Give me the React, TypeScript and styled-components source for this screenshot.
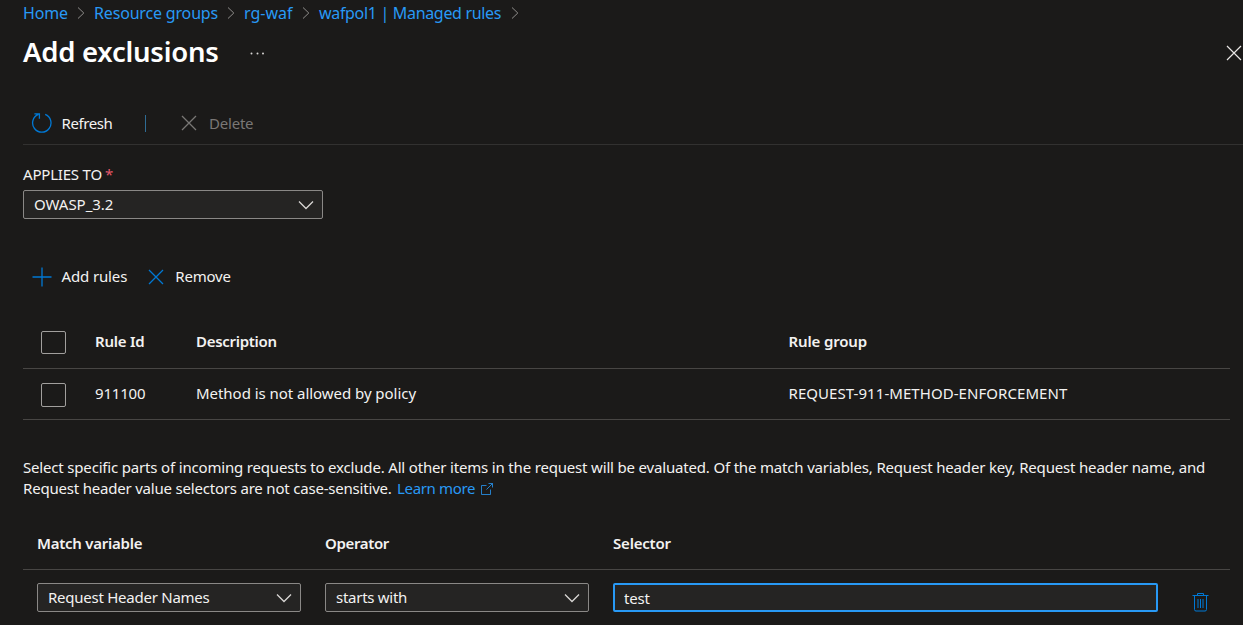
import React from 'react';
import styled, { createGlobalStyle } from 'styled-components';

const GlobalStyle = createGlobalStyle`
  * { box-sizing: border-box; }
  html, body { margin: 0; background: #1b1a19; overflow: hidden; }
  body {
    font-family: "Noto Sans", "Open Sans", sans-serif;
    font-size: 15px;
    line-height: 21px;
    color: #f3f2f1;
  }
`;

const Page = styled.main`
  width: 1243px;
  height: 625px;
  padding-left: 23px;
  overflow: hidden;
  background: #1b1a19;
`;

const Label = styled.span<{ $track?: number }>`
  letter-spacing: ${p => p.$track ?? -0.2}px;
  white-space: nowrap;
`;

const Breadcrumb = styled.nav`
  display: flex;
  align-items: center;
  height: 26px;
`;

const Crumb = styled.a<{ $width: number; $track: number }>`
  width: ${p => p.$width}px;
  color: #2899f5;
  font-size: 16px;
  letter-spacing: ${p => p.$track}px;
  white-space: nowrap;
`;

const CrumbArrow = styled.svg`
  width: 8px;
  height: 12px;
  margin: 0 9px;
  fill: none;
  stroke: #8f8d8b;
`;

const TitleBar = styled.header`
  display: flex;
  align-items: center;
  height: 52px;
`;

const Title = styled.h1`
  width: 227px;
  margin: 0;
  font-size: 27.5px;
  font-weight: 600;
  line-height: 36px;
  letter-spacing: -0.25px;
  color: #fff;
  white-space: nowrap;
`;

const More = styled.svg`
  width: 16px;
  height: 4px;
  margin-top: 1px;
  fill: #d8d6d4;
`;

const Close = styled.svg`
  width: 16px;
  height: 16px;
  margin: 2px 1px 0 auto;
  fill: none;
  stroke: #e8e6e4;
  stroke-width: 1.2;
`;

const Toolbar = styled.div`
  display: flex;
  align-items: center;
  height: 67px;
  padding: 24px 0 0 8px;
  border-bottom: 1px solid #323130;
`;

const Command = styled.button<{ $gap: number; $disabled?: boolean }>`
  display: flex;
  align-items: center;
  gap: ${p => p.$gap}px;
  padding: 0;
  border: 0;
  background: none;
  font: inherit;
  color: ${p => (p.$disabled ? '#797775' : '#f3f2f1')};
`;

const Glyph = styled.svg<{ $size: number; $tone?: string }>`
  width: ${p => p.$size}px;
  height: ${p => p.$size}px;
  fill: none;
  stroke: ${p => p.$tone ?? '#0078d4'};
  stroke-width: 1.3;
`;

const Separator = styled.i`
  width: 1px;
  height: 17px;
  margin: 0 35px 0 33px;
  background: #2f6c94;
`;

const FieldLabel = styled.label`
  display: block;
  height: 45px;
  padding-top: 19px;
`;

const Required = styled.span`
  margin-left: 3px;
  color: #e5586a;
`;

const Dropdown = styled.div<{ $width: number }>`
  display: flex;
  align-items: center;
  justify-content: space-between;
  width: ${p => p.$width}px;
  height: 29px;
  padding: 0 8px 0 10px;
  border: 1px solid #8a8886;
  border-radius: 2px;
  background: #252423;
`;

const Chevron = styled.svg`
  width: 16px;
  height: 10px;
  margin-top: 1px;
  fill: none;
  stroke: #d8d6d4;
  stroke-width: 1.3;
`;

const RuleActions = styled.div`
  display: flex;
  align-items: center;
  gap: 20.5px;
  height: 21px;
  margin: 47px 0 0 9px;
`;

const RuleRow = styled.div<{ $header?: boolean }>`
  display: grid;
  grid-template-columns: 54px 101px 592.5px 1fr;
  align-items: center;
  width: 1207px;
  height: ${p => (p.$header ? 53 : 51)}px;
  padding: 0 0 2px 18px;
  border-bottom: 1px solid #484644;
  font-weight: ${p => (p.$header ? 600 : 400)};
`;

const RuleTable = styled.section`
  margin-top: 29px;
`;

const Checkbox = styled.span<{ $height: number; $drop: number }>`
  width: 25px;
  height: ${p => p.$height}px;
  margin-top: ${p => p.$drop}px;
  border: 1px solid #a19f9d;
  border-radius: 2px;
`;

const Help = styled.p`
  margin: 37px 0 0;
  white-space: nowrap;
`;

const LearnMore = styled.a`
  margin-left: 1.5px;
  color: #2899f5;
`;

const ExternalIcon = styled.svg`
  width: 14px;
  height: 14px;
  margin-left: 4.5px;
  vertical-align: -2px;
  fill: none;
  stroke: #2899f5;
  stroke-opacity: 0.8;
`;

const MatchRow = styled.div<{ $header?: boolean }>`
  display: grid;
  grid-template-columns: 288px 288px 545px 1fr;
  align-items: center;
  width: 1207px;
  height: ${p => (p.$header ? 52 : 56)}px;
  padding-left: 14px;
  border-bottom: 1px solid ${p => (p.$header ? '#484644' : 'transparent')};
  font-weight: ${p => (p.$header ? 600 : 400)};
`;

const MatchTable = styled.section`
  margin-top: 19px;
`;

const SelectorInput = styled.input`
  width: 545px;
  height: 29px;
  padding: 1px 9px 0;
  border: 2px solid #2899f5;
  border-radius: 2px;
  outline: 0;
  background: #252423;
  color: #f3f2f1;
  font: inherit;
  letter-spacing: -0.2px;
`;

const Trash = styled.svg`
  width: 17px;
  height: 20px;
  margin: 9px 0 0 34px;
  fill: none;
  stroke: #0078d4;
`;

const ArrowRight = () => (
  <CrumbArrow viewBox="0 0 8 12"><path d="M1 .5 6.8 6 1 11.5" /></CrumbArrow>
);

const ChevronDown = () => (
  <Chevron viewBox="0 0 16 10"><path d="M1 1.5 8 8.5 15 1.5" /></Chevron>
);

const Cross = ({ tone }: { tone?: string }) => (
  <Glyph $size={16} $tone={tone} viewBox="0 0 16 16"><path d="M1 1 15 15M15 1 1 15" /></Glyph>
);

const crumbs = [
  { text: 'Home', width: 45, track: -0.2 },
  { text: 'Resource groups', width: 124, track: -0.17 },
  { text: 'rg-waf', width: 49, track: 0 },
  { text: 'wafpol1 | Managed rules', width: 183, track: -0.32 },
];

export default function App() {
  return (
    <Page>
      <GlobalStyle />
      <Breadcrumb>
        {crumbs.map(c => (
          <React.Fragment key={c.text}>
            <Crumb $width={c.width} $track={c.track}>{c.text}</Crumb>
            <ArrowRight />
          </React.Fragment>
        ))}
      </Breadcrumb>
      <TitleBar>
        <Title>Add exclusions</Title>
        <More viewBox="0 0 16 4">
          <circle cx="1.5" cy="2.5" r="1" /><circle cx="7.5" cy="2.5" r="1" /><circle cx="13" cy="2.5" r="1" />
        </More>
        <Close viewBox="0 0 16 16"><path d="M1 1 15 15M15 1 1 15" /></Close>
      </TitleBar>
      <Toolbar>
        <Command $gap={9.5}>
          <Glyph $size={21} viewBox="0 0 21 21">
            <path d="M14.2 1.4A9.2 9.2 0 1 1 7.4 1.4M3.4 .9H8.4V5.7" />
          </Glyph>
          <Label $track={-0.4}>Refresh</Label>
        </Command>
        <Separator />
        <Command $gap={11.5} $disabled>
          <Cross tone="#797775" />
          <Label>Delete</Label>
        </Command>
      </Toolbar>
      <FieldLabel><Label $track={-0.2}>APPLIES TO</Label><Required>*</Required></FieldLabel>
      <Dropdown $width={300}><Label $track={-0.03}>OWASP_3.2</Label><ChevronDown /></Dropdown>
      <RuleActions>
        <Command $gap={9.5}>
          <Glyph $size={20} viewBox="0 0 20 20"><path d="M10 .5V19.5M.5 10H19.5" /></Glyph>
          <Label $track={-0.13}>Add rules</Label>
        </Command>
        <Command $gap={11.5}>
          <Cross />
          <Label>Remove</Label>
        </Command>
      </RuleActions>
      <RuleTable>
        <RuleRow $header>
          <Checkbox $height={23} $drop={2} />
          <Label $track={-0.25}>Rule Id</Label>
          <Label $track={-0.3}>Description</Label>
          <Label $track={-0.15}>Rule group</Label>
        </RuleRow>
        <RuleRow>
          <Checkbox $height={24} $drop={4} />
          <Label>911100</Label>
          <Label $track={-0.04}>Method is not allowed by policy</Label>
          <Label $track={0.06}>REQUEST-911-METHOD-ENFORCEMENT</Label>
        </RuleRow>
      </RuleTable>
      <Help>
        <Label $track={-0.176}>Select specific parts of incoming requests to exclude. All other items in the request will be evaluated. Of the match variables, Request header key, Request header name, and</Label>
        <br />
        <Label>Request header value selectors are not case-sensitive.</Label>{' '}
        <LearnMore>
          <Label $track={-0.35}>Learn more</Label>
          <ExternalIcon viewBox="0 0 14 14">
            <path d="M6.5 3.5H1.5V12.5H10.5V7.5M8.5 1.5H12.5V5.5M12.5 1.5 6.5 7.5" />
          </ExternalIcon>
        </LearnMore>
      </Help>
      <MatchTable>
        <MatchRow $header>
          <Label $track={-0.25}>Match variable</Label>
          <Label $track={-0.35}>Operator</Label>
          <Label $track={-0.2}>Selector</Label>
        </MatchRow>
        <MatchRow>
          <Dropdown $width={264}><Label $track={-0.25}>Request Header Names</Label><ChevronDown /></Dropdown>
          <Dropdown $width={264}><Label $track={-0.27}>starts with</Label><ChevronDown /></Dropdown>
          <SelectorInput defaultValue="test" />
          <Trash viewBox="0 0 17 20">
            <path d="M.5 3.5H16.5M5.5 3.5V1.5H11.5V3.5M2.5 4V17.5Q2.5 19 4 19H13Q14.5 19 14.5 17.5V4M6 7V16M8.5 7V16M11 7V16" />
          </Trash>
        </MatchRow>
      </MatchTable>
    </Page>
  );
}
